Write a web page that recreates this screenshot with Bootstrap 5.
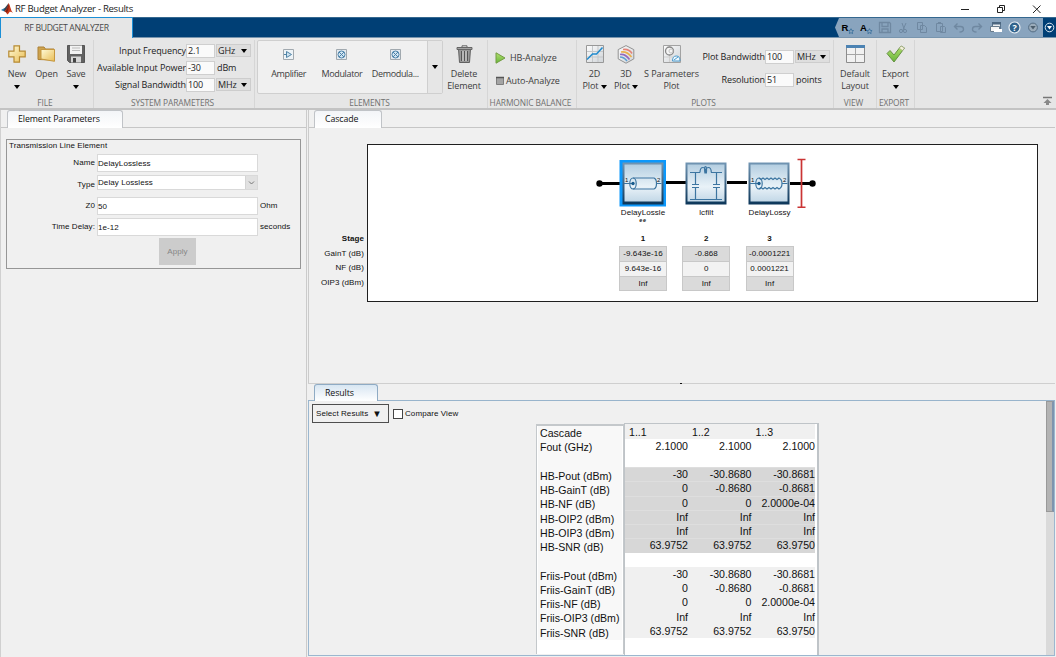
<!DOCTYPE html>
<html lang="en">
<head>
  <meta charset="UTF-8" />
  <meta name="viewport" content="width=device-width, initial-scale=1.0" />
  <title>RF Budget Analyzer - Results</title>
  <link href="https://cdn.jsdelivr.net/npm/bootstrap@5.3.0/dist/css/bootstrap.min.css" rel="stylesheet" />
  <style>
    body { width: 1056px; height: 657px; overflow: hidden; background: #f0f0f0; color: #1c1c1c; font: 9px/12px "Open Sans", "Noto Sans", sans-serif; letter-spacing: -.1px; white-space: nowrap; }
    svg { display: block; flex: none; }
    .titlebar { height: 17px; background: #fff; font-size: 9.6px; letter-spacing: -.3px; }
    .titlebar .logo { margin: 0 2px 0 1px; }
    .win-btns { gap: 26px; padding-right: 14px; }

    /* ribbon */
    .ribbon { height: 21px; background: #003f75; border-top: 1px solid #35688f; border-bottom: 1px solid #7895ae; }
    .ribbon-tab { width: 133px; height: 21px; margin-top: -1px; background: #e6e6e6; border: 1px solid #1b8fd6; border-width: 1px 1px 0 1px; color: #4a4a4a; font-size: 8.7px; letter-spacing: -.35px; }
    .quick { width: 208px; background: #89a4be; clip-path: polygon(4px 0, 100% 0, 100% 100%, 4px 100%, 0 50%); }
    .strip { height: 72px; background: #e6e6e6; border-bottom: 2px solid #c3c3c3; color: #3c3c3c; }
    .group { height: 68px; margin-top: 2px; border-right: 1px solid #d6d6d6; }
    .group-body { height: 56px; }
    .group-name { height: 12px; margin-top: 1px; padding-right: 3px; font-size: 8.4px; color: #717171; text-align: center; }
    .tool { padding-top: 5px; text-align: center; }
    .tool svg { margin: 0 auto 5px; }
    .tri { display: inline-block; border: 3px solid transparent; border-top: 4px solid #000; border-bottom: 0; }
    .form-line { height: 17px; padding-right: 3px; color: #222; }
    .field { height: 14px; width: 29px; padding-left: 1px; background: #fafafa; border: 1px solid #cfcfcf; line-height: 12px; }
    .unit { height: 13px; width: 35px; margin-left: 1px; padding: 0 3px 0 1px; background: #dedede; border: 1px solid #cdcdcd; }
    .unit-text { width: 36px; padding-left: 2px; }
    .gallery { width: 186px; height: 54px; background: #f0f0f0; border: 1px solid #cfcfcf; border-radius: 2px; }
    .gallery .item { width: 53.3px; padding-top: 8px; text-align: center; letter-spacing: -.35px; }
    .gallery .item svg { margin: 0 auto 8px; }
    .gallery .more { width: 15px; background: #e6e6e6; border-left: 1px solid #cfcfcf; }

    /* document panes */
    .left-pane { width: 307px; border-right: 1px solid #cbcbcb; border-left: 1px solid #d0d0d0; }
    .right-pane { width: 747px; margin-left: 1px; }
    .top-pane { height: 273px; border-left: 1px solid #cbcbcb; }
    .tabs { height: 18px; border-bottom: 1px solid #c6c6c6; padding-left: 6px; }
    .top-pane .tabs { padding-left: 5px; }
    .doc-tab { height: 18px; background: linear-gradient(#f3f5f8, #fff); border: 1px solid #c0c3c7; border-bottom: 0; border-radius: 3px 3px 0 0; font-size: 8.8px; line-height: 17px; padding-left: 10px; color: #111; }
    .tabs.live { height: 17px; border-color: #98b4cc; }
    .tabs.live .doc-tab { height: 17px; border-color: #8fabc4; background: linear-gradient(#d8e6f2, #fff); }
    .sans { font-family: "Liberation Sans", Arial, sans-serif; font-size: 8px; line-height: 10px; letter-spacing: .08px; color: #111; }
    .param-box { width: 295px; height: 130px; margin: 11px 0 0 5px; border: 1px solid #969696; }
    .param-row { display: grid; grid-template-columns: 88px 161px 1fr; column-gap: 2px; align-items: center; }
    .param-row .inp { width: 161px; background: #fff; border: 1px solid #d9d9d9; height: 18px; line-height: 17px; }
    .param-row .pick { height: 15px; line-height: 13px; }
    .pick .arrow { width: 12px; height: 13px; background: #e1e1e1; border-left: 1px solid #d4d4d4; }
    .apply { width: 37px; height: 27px; margin: 2px 0 0 152px; background: #cccccc; color: #868686; line-height: 27px; text-align: center; }

    .canvas { width: 671px; height: 158px; background: #fff; border: 1px solid #1f1f1f; }
    .stage-names { width: 58px; padding: 88px 3px 0 0; text-align: right; line-height: 14.5px; }
    .stage-list { margin-left: 243.4px; }
    .stage-col { width: 63.3px; text-align: center; }
    .val { width: 48px; height: 15px; margin: 0 auto; line-height: 14px; border: 1px solid #c8c8c8; border-bottom-width: 0; background: #dadada; }
    .val.even { background: #f2f2f2; height: 14.5px; }
    .val:last-child { border-bottom-width: 1px; }
    .el-name { height: 9px; line-height: 9px; }
    .el-rest { height: 6px; line-height: 6px; font-size: 5.5px; font-weight: bold; letter-spacing: .8px; }

    /* results */
    .results { height: 255px; border: 1px solid #9bb7cf; border-top: 0; }
    .select-btn { width: 77px; height: 19px; border: 1px solid #4e4e4e; line-height: 17px; padding-left: 3px; }
    .chk { width: 10px; height: 10px; margin: 0 2px 0 4px; border: 1px solid #444; background: #fff; }
    .row-names { width: 88px; height: 230px; padding-left: 3px; margin-top: 1px; background: #fff; border: 1px solid #c4c8cb; border-width: 2px 1px 0 1px; }
    .row-names div { margin-left: -2px; padding-left: 2px; width: 84px; height: 14.25px; line-height: 14.5px; background: #f8f8f8; }
    .res-grid { width: 195px; height: 232px; background: #fff; border: 1px solid #bfc4c8; border-width: 1px 2px 0 1px; }
    .big { font-size: 10.6px; letter-spacing: 0; }
    .res-row { display: grid; grid-template-columns: 63px 63.5px 63.5px; height: 14.25px; line-height: 14.2px; text-align: right; width: 190px; }
    .res-row.head { background: #f0f0f0; text-align: left; height: 14.5px; line-height: 17px; }
    .res-row.head span { padding-left: 4px; }
    .res-row.hb { background: #d7d7d7; box-shadow: inset 0 1px #dedede; }
    .res-row.fr { background: #f0f0f0; }
    .scroller { width: 8px; background: #dadada; }
    .thumb { height: 111px; background: #b3b3b3; border: 1px solid #999; border-right: 2px solid #7e94ae; }
  </style>
</head>
<body>
  <header class="titlebar d-flex justify-content-between align-items-center">
    <div class="d-flex align-items-center">
      <svg class="logo" width="12" height="13" viewBox="0 0 12 13">
        <path d="M0 8 4 5.8 5.6 7.5 3.4 9.5Z" fill="#2878ac" /><path d="M4 5.8 7.5 1.2 6.8 6 3.6 9.4 2.9 8Z" fill="#36434f" />
        <path d="M7.5 1Q8.6 2 9.4 5.5T12 11Q10 9.5 8.7 9.8 7.6 12 6.2 12.4 5.5 9.8 3.4 9.4 6.4 7 7.5 1Z" fill="#c63a1c" /><path d="M7.6 1.6Q8.2 6 7.2 8.5L5.8 11Q5.5 9.8 4.2 9.4 6.8 6.4 7.6 1.6Z" fill="#842113" />
      </svg>
      <span>RF Budget Analyzer - Results</span>
    </div>
    <div class="win-btns d-flex align-items-center">
      <svg width="10" height="10" viewBox="0 0 10 10"><path d="M1 5.5h8" stroke="#222" fill="none" /></svg>
      <svg width="10" height="10" viewBox="0 0 10 10"><path d="M1.5 3.5h5v5h-5zM3.5 3.500v-2h5v5h-2" stroke="#222" fill="none" /></svg>
      <svg width="10" height="10" viewBox="0 0 10 10"><path d="M1 1.500 8.500 9M8.500 1.500 1 9" stroke="#222" fill="none" /></svg>
    </div>
  </header>

  <nav class="ribbon d-flex justify-content-between">
    <div class="ribbon-tab d-flex align-items-center justify-content-center">RF BUDGET ANALYZER</div>
    <div class="d-flex">
      <div class="quick">
        <svg width="208" height="19" viewBox="835 18 208 19">
          <g font-family="Liberation Sans" font-weight="700" font-size="9.5"><text x="841.5" y="31">R</text><text x="860" y="31">A</text></g>
          <g fill="none" stroke="#2d6797" stroke-width=".7"><path id="star" d="m851 28.700.800 1.700 1.800.200-1.300 1.200.300 1.800-1.600-.900-1.600.900.300-1.800-1.300-1.200 1.800-.200z" /><use href="#star" x="18.500" /></g>
          <g fill="none" stroke="#6f88a1">
            <path d="M879.500 22.500h10l1 1v9h-11zM882 22.500v4h6v-4M882 33v-4h6v4" stroke-width="1.300" />
            <path d="M902 23l2.500 7M906 23l-3 7" /><circle cx="901" cy="31" r="1.600" /><circle cx="905" cy="31" r="1.600" />
            <path d="M917.500 22.500h5v7h-5zM920.500 25.500h4l2 2v5h-6z" /><path d="M936.500 23.500h6v8h-6zM938 22.500h3M940.500 26.500h4l1 1v5h-5z" />
            <path d="M957.500 23.500l-3 3 3 3M954.500 26.500h6q3 0 3 2.700t-4 2.800" stroke-width="1.400" /><path d="M978.500 23.500l3 3-3 3M981.500 26.500h-6q-3 0-3 2.700t4 2.800" stroke-width="1.400" />
          </g>
          <path d="M992.500 22.500h8v9h-8z" fill="#e9edf0" stroke="#58728b" /><path d="M992 22h9v2.500h-9z" fill="#4b6680" /><path d="M990.500 26.500h9v5h-9z" fill="#f5f5f5" stroke="#687b8c" /><path d="M994 29h8v3h-8z" fill="#fff" />
          <circle cx="1014.500" cy="27.500" r="5.500" fill="#31638c" stroke="#e8eef4" stroke-width="1.200" /><text x="1014.500" y="31" text-anchor="middle" font-family="Open Sans" font-weight="700" font-size="9" fill="#fff">?</text>
          <circle cx="1033" cy="27.500" r="4.400" fill="#9aabba" stroke="#546d84" /><path d="M1030.300 26h5.400l-2.700 3.500z" fill="#4b5d6c" />
        </svg>
      </div>
      <svg width="13" height="19" viewBox="1043 18 13 19"><circle cx="1049.500" cy="27.500" r="4.300" fill="none" stroke="#dce8f2" /><path d="M1047 26h5l-2.500 3.500z" fill="#fff" /></svg>
    </div>
  </nav>

  <svg width="0" height="0" class="position-absolute">
    <defs>
      <linearGradient id="gold" x2="1" y2="1"><stop stop-color="#fffbd8" /><stop offset="1" stop-color="#e9bd55" /></linearGradient>
      <linearGradient id="grn" x2="0" y2="1"><stop stop-color="#b5e070" /><stop offset="1" stop-color="#66b53a" /></linearGradient>
      <linearGradient id="gry" x2="1" y2="1"><stop stop-color="#fcfcfc" /><stop offset="1" stop-color="#d0d4d8" /></linearGradient>
      <linearGradient id="blk" x2="0" y2="1"><stop stop-color="#b4cee1" /><stop offset=".6" stop-color="#e9f2f8" /><stop offset="1" stop-color="#c3d8e7" /></linearGradient>
      <linearGradient id="frm" x2="0" y2="1"><stop stop-color="#7195b3" /><stop offset="1" stop-color="#0c3659" /></linearGradient>
    </defs>
  </svg>

  <section class="strip d-flex">
    <div class="group" style="width:94px">
      <div class="group-body d-flex" style="padding-left:2px">
        <div class="tool" style="width:30px">
          <svg width="18" height="18" viewBox="0 0 18 18"><path d="M6 .8h5.500v5.400h5.700v5.600h-5.700v5.400H6v-5.400H.8V6.200H6z" fill="url(#gold)" stroke="#b78a33" stroke-width="1.200" /></svg>
          New<br /><i class="tri"></i>
        </div>
        <div class="tool" style="width:29px">
          <svg width="19" height="18" viewBox="0 0 19 18"><path d="M1 14.500V2h6l1.500 2H17v11z" fill="#cda34f" stroke="#ad8136" /><path d="M4 4.500h13.500v11.800L4 14z" fill="url(#gold)" stroke="#c6973e" /></svg>
          Open
        </div>
        <div class="tool" style="width:30px">
          <svg width="18" height="18" viewBox="0 0 18 18"><path d="M.5.500h17v17h-15l-2-2z" fill="#626262" stroke="#555" /><path d="M3 .500h12V9H3z" fill="#f2f2f2" /><path d="M5 3h8M5 5.500h8" stroke="#bbb" /><path d="M4 11.500h10v6H4z" fill="#d6d6d6" /><path d="M6 13h3v4.500H6z" fill="#444" /></svg>
          Save<br /><i class="tri"></i>
        </div>
      </div>
      <div class="group-name">FILE</div>
    </div>

    <div class="group" style="width:161px">
      <div class="group-body" style="padding-top:2px">
        <div class="form-line d-flex align-items-center justify-content-end">Input Frequency<div class="field">2.1</div><div class="unit d-flex align-items-center justify-content-between">GHz<i class="tri"></i></div></div>
        <div class="form-line d-flex align-items-center justify-content-end">Available Input Power<div class="field">-30</div><div class="unit-text">dBm</div></div>
        <div class="form-line d-flex align-items-center justify-content-end">Signal Bandwidth<div class="field">100</div><div class="unit d-flex align-items-center justify-content-between">MHz<i class="tri"></i></div></div>
      </div>
      <div class="group-name">SYSTEM PARAMETERS</div>
    </div>

    <div class="group" style="width:233px">
      <div class="group-body d-flex" style="padding-left:2px">
        <div class="gallery d-flex">
          <div class="item" style="margin-left:4px"><svg width="11" height="11" viewBox="0 0 11 11"><path d="M.5.500h10v10H.5z" fill="#edf3f7" stroke="#a1a9af" /><path d="M3.500 2.500v6l5-3zM1 5.500h2.500" fill="#cde2f0" stroke="#4f83a6" /></svg>Amplifier</div>
          <div class="item"><svg width="11" height="11" viewBox="0 0 11 11"><path d="M.5.500h10v10H.5z" fill="#e3eaf0" stroke="#a1a9af" /><circle cx="5.500" cy="5.500" r="3.500" fill="#d4e6f2" stroke="#4b82a9" /><path d="m3 3 5 5m0-5-5 5" stroke="#4b82a9" /></svg>Modulator</div>
          <div class="item"><svg width="11" height="11" viewBox="0 0 11 11"><path d="M.5.500h10v10H.5z" fill="#e3eaf0" stroke="#a1a9af" /><circle cx="5.500" cy="5.500" r="3.500" fill="#d4e6f2" stroke="#4b82a9" /><path d="m3 3 5 5m0-5-5 5" stroke="#4b82a9" /></svg>Demodula...</div>
          <div class="more d-flex align-items-center justify-content-center ms-auto"><i class="tri"></i></div>
        </div>
        <div class="tool" style="width:42px">
          <svg width="17" height="18" viewBox="0 0 17 18"><path d="M2.500 4h12l-1 13.500h-10z" fill="#999" stroke="#616161" /><path d="M5.500 6v10M8.500 6v10M11.500 6v10" stroke="#555" /><path d="M7 6v10M10 6v10" stroke="#d6d6d6" /><path d="M1 2.500h15v2H1z" fill="#a2a2a2" stroke="#666" /><path d="M6 2V.800h5V2" fill="none" stroke="#666" /></svg>
          Delete<br />Element
        </div>
      </div>
      <div class="group-name">ELEMENTS</div>
    </div>

    <div class="group" style="width:89px">
      <div class="group-body" style="padding:11px 0 0 7px">
        <div class="d-flex align-items-center" style="height:13px"><svg width="11" height="12" viewBox="0 0 11 12" class="me-1"><path d="M1 .800v10.400L10 6z" fill="url(#grn)" stroke="#729c43" /></svg>HB-Analyze</div>
        <div class="d-flex align-items-center" style="height:13px;margin-top:10px"><svg width="11" height="10" viewBox="0 0 11 10"><path d="M1.500 1.500h7v7h-7z" fill="#a4a4a4" stroke="#7d7d7d" /><path d="M1 1.500h8" stroke="#555" stroke-width="1.500" /></svg>Auto-Analyze</div>
      </div>
      <div class="group-name">HARMONIC BALANCE</div>
    </div>

    <div class="group" style="width:257px">
      <div class="group-body d-flex" style="padding-left:1px">
        <div class="tool" style="width:33px">
          <svg width="18" height="18" viewBox="0 0 18 18"><path d="M.5.500h17v17H.5z" fill="url(#gry)" stroke="#989898" /><path d="M6.500 1v16M12 1v16M1 6.500h16M1 12h16" stroke="#c3c7ca" /><path d="M1 14.500 6.500 9h4l6-6.500" fill="none" stroke="#208bcf" stroke-width="1.500" /></svg>
          2D<br />Plot <i class="tri"></i>
        </div>
        <div class="tool" style="width:30px">
          <svg width="18" height="19" viewBox="0 0 18 19" style="margin-bottom:4px"><path d="m9 .600 7.800 4v9.300L9 18.200 1.200 13.900V4.600z" fill="url(#gry)" stroke="#929292" /><g fill="none" stroke-width="1.600"><path d="M6 4.500q6-1 9 4" stroke="#e48378" /><path d="M4 7q6-1 10.500 5" stroke="#e9b04f" /><path d="M3 9.500q5-1 9.500 5" stroke="#946abd" /><path d="M3 12q4 0 7 4" stroke="#5c9ed1" /></g></svg>
          3D<br />Plot <i class="tri"></i>
        </div>
        <div class="tool" style="width:61px">
          <svg width="18" height="18" viewBox="0 0 18 18"><path d="M.5.500h17v17H.5z" fill="url(#gry)" stroke="#a2a2a2" /><path d="M6.500 1v16M1 12h16" stroke="#cfcfcf" /><circle cx="6.500" cy="6" r="4" fill="#f5f5f5" stroke="#888" stroke-width="1.300" /><circle cx="8" cy="6" r="2" fill="none" stroke="#c4c4c4" /><path d="M9.500 16q0-5 3.800-5t3.700 5z" fill="#eff8fe" stroke="#4c9bcd" /><path d="m11 15 4-3" stroke="#4c9bcd" /></svg>
          S Parameters<br />Plot
        </div>
        <div class="ms-auto" style="padding-top:8px">
          <div class="form-line d-flex align-items-center justify-content-end">Plot Bandwidth<div class="field">100</div><div class="unit d-flex align-items-center justify-content-between">MHz<i class="tri"></i></div></div>
          <div class="form-line d-flex align-items-center justify-content-end" style="margin-top:6px">Resolution<div class="field">51</div><div class="unit-text">points</div></div>
        </div>
      </div>
      <div class="group-name">PLOTS</div>
    </div>

    <div class="group" style="width:43px">
      <div class="group-body tool">
        <svg width="19" height="18" viewBox="0 0 19 18"><path d="M.5.500h18v17H.5z" fill="#f1f1f1" stroke="#8c8c8c" /><path d="M0 0h19v3H0z" fill="#4c83b3" /><path d="M9.500 3v14M1 9.500h17" stroke="#a5a5a5" /></svg>
        Default<br />Layout
      </div>
      <div class="group-name">VIEW</div>
    </div>
    <div class="group" style="width:38px">
      <div class="group-body tool">
        <svg width="20" height="18" viewBox="0 0 20 18"><path d="m1 8.500 3-3 4 4.500 7-9 3.500 2L8 17z" fill="url(#grn)" stroke="#669143" /><path d="m15 1 3.500 2-2 2.500-3.200-2.300z" fill="#f4f2db" stroke="#a3a387" stroke-width=".6" /></svg>
        Export<br /><i class="tri"></i>
      </div>
      <div class="group-name">EXPORT</div>
    </div>
    <svg class="ms-auto align-self-end" width="13" height="12" viewBox="0 0 13 12"><path d="M0 1.500h9" stroke="#777" stroke-width="1.500" /><path d="M4.500 3 8.500 7H6v2H3V7H.5z" fill="#888" /></svg>
  </section>

  <main class="d-flex" style="height:547px">
    <aside class="left-pane">
      <div class="tabs"><div class="doc-tab" style="width:116px">Element Parameters</div></div>
      <div class="param-box sans">
        <div style="padding:1px 0 0 2px;height:14px">Transmission Line Element</div>
        <div class="param-row"><div class="text-end">Name</div><div class="inp">DelayLossless</div></div>
        <div class="param-row" style="margin-top:3px"><div class="text-end" style="padding-top:4px">Type</div><div class="inp pick d-flex justify-content-between">Delay Lossless<div class="arrow"><svg width="11" height="13" viewBox="0 0 11 13"><path d="m3 5.500 2.500 2.500L8 5.500" fill="none" stroke="#777" /></svg></div></div></div>
        <div class="param-row" style="margin-top:7px"><div class="text-end">Z0</div><div class="inp">50</div><div>Ohm</div></div>
        <div class="param-row" style="margin-top:3px"><div class="text-end">Time Delay:</div><div class="inp">1e-12</div><div>seconds</div></div>
        <div class="apply">Apply</div>
      </div>
    </aside>

    <section class="right-pane">
      <div class="top-pane">
        <div class="tabs"><div class="doc-tab" style="width:68px">Cascade</div></div>
        <div class="d-flex sans" style="padding-top:16px">
          <div class="stage-names"><b>Stage</b><br />GainT (dB)<br />NF (dB)<br />OIP3 (dBm)</div>
          <div class="canvas">
            <svg width="230" height="52" viewBox="590 156 230 52" style="margin:11px 0 0 222px">
              <path d="M599 183.500h21M666 182.500h20M727 182.500h20M790 183.500h22" stroke="#000" stroke-width="3" />
              <circle cx="599.500" cy="183.500" r="3.200" /><circle cx="812.500" cy="183.500" r="3.200" />
              <path d="M619.500 160h46.500v46.500h-46.500z" fill="#0c98fb" />
              <g id="frame"><path d="M622.500 162.500h41v42h-41z" fill="url(#frm)" /><path d="M624.500 164.500h37v37h-37z" fill="url(#blk)" /></g>
              <use href="#frame" x="63" /><use href="#frame" x="126" />
              <g fill="none" stroke="#3c75a1" stroke-width="1.200">
                <path d="M624 183.500h8M633 178h21q2.500 1 2.500 5.500t-2.500 5.500h-21M656.500 183.500h5" /><ellipse cx="633" cy="183.500" rx="3.200" ry="5.500" />
                <path d="M690 172.500h10M711 172.500h11M690 199.500h32M695.500 173v11M695.500 187v12M716.500 173v11M716.500 187v12M692 184.500h7M692 187.500h7M713 184.500h7M713 187.500h7M700 172.500q0-5 3-5t2 6q-1-7 .5-7t.8 7q-1-6 2-6t3 5" />
                <path d="M750 183.500h8M759 178l2 1.500 2-1.500 2 1.500 2-1.500 2 1.500 2-1.500 2 1.500 2-1.500 2 1.500 2-1.500q3 1.500 3 5.500t-3 5.500l-2-1.500-2 1.500-2-1.500-2 1.500-2-1.500-2 1.500-2-1.500-2 1.500-2-1.500-2 1.500M782.500 183.500h5" /><ellipse cx="759" cy="183.500" rx="3.200" ry="5.500" />
              </g>
              <g fill="#185b8d"><circle cx="633" cy="183.500" r="1.700" /><circle cx="759" cy="183.500" r="1.700" /></g>
              <g font-family="Liberation Sans" font-size="6" fill="#111"><text x="625" y="182">1</text><text x="657" y="182">2</text><text x="751" y="182">1</text><text x="783" y="182">2</text></g>
              <path d="M797.500 159.500h8M797.500 207.300h8M801.500 159v48" stroke="#ca3434" stroke-width="1.700" />
            </svg>
            <div class="stage-list d-flex">
              <div class="stage-col"><div class="el-name">DelayLossle</div><div class="el-rest">ee</div></div>
              <div class="stage-col"><div class="el-name">lcfilt</div></div>
              <div class="stage-col"><div class="el-name">DelayLossy</div></div>
            </div>
            <div class="stage-list d-flex" style="margin-top:11px">
              <div class="stage-col"><b class="d-block" style="height:12px">1</b><div class="val">-9.643e-16</div><div class="val even">9.643e-16</div><div class="val">Inf</div></div>
              <div class="stage-col"><b class="d-block" style="height:12px">2</b><div class="val">-0.868</div><div class="val even">0</div><div class="val">Inf</div></div>
              <div class="stage-col"><b class="d-block" style="height:12px">3</b><div class="val">-0.0001221</div><div class="val even">0.0001221</div><div class="val">Inf</div></div>
            </div>
          </div>
        </div>
      </div>

      <div style="height:1px;background:#cfcfcf"><div style="width:2px;height:1px;margin-left:372px;background:#111"></div></div>
      <div class="tabs live"><div class="doc-tab" style="width:64px">Results</div></div>
      <div class="results d-flex sans">
        <div style="padding:3px 0 0 3px;width:227px">
          <div class="d-flex align-items-center"><div class="select-btn d-flex">Select Results<span style="margin-left:4px;font-size:9.5px">▼</span></div><div class="chk"></div>Compare View</div>
        </div>
        <div class="d-flex big" style="padding-top:22px">
          <div class="row-names" id="rowNames"></div>
          <div class="res-grid" id="resGrid"></div>
        </div>
        <div class="scroller ms-auto"><div class="thumb"></div></div>
      </div>
    </section>
  </main>

  <script src="https://cdn.jsdelivr.net/npm/bootstrap@5.3.0/dist/js/bootstrap.bundle.min.js"></script>
  <script>
    // label, row style, one value per cascade
    const rows = [
      ['Cascade', 'head', '1..1', '1..2', '1..3'],
      ['Fout (GHz)', '', '2.1000', '2.1000', '2.1000'],
      ['', '', '', '', ''],
      ['HB-Pout (dBm)', 'hb', '-30', '-30.8680', '-30.8681'],
      ['HB-GainT (dB)', 'hb', '0', '-0.8680', '-0.8681'],
      ['HB-NF (dB)', 'hb', '0', '0', '2.0000e-04'],
      ['HB-OIP2 (dBm)', 'hb', 'Inf', 'Inf', 'Inf'],
      ['HB-OIP3 (dBm)', 'hb', 'Inf', 'Inf', 'Inf'],
      ['HB-SNR (dB)', 'hb', '63.9752', '63.9752', '63.9750'],
      ['', '', '', '', ''],
      ['Friis-Pout (dBm)', 'fr', '-30', '-30.8680', '-30.8681'],
      ['Friis-GainT (dB)', 'fr', '0', '-0.8680', '-0.8681'],
      ['Friis-NF (dB)', 'fr', '0', '0', '2.0000e-04'],
      ['Friis-OIP3 (dBm)', 'fr', 'Inf', 'Inf', 'Inf'],
      ['Friis-SNR (dB)', 'fr', '63.9752', '63.9752', '63.9750']
    ];
    rows.forEach(function (r) {
      document.getElementById('rowNames').innerHTML += '<div>' + r[0] + '</div>';
      document.getElementById('resGrid').innerHTML += '<div class="res-row ' + r[1] + '"><span>' + r.slice(2).join('</span><span>') + '</span></div>';
    });
  </script>
</body>
</html>
